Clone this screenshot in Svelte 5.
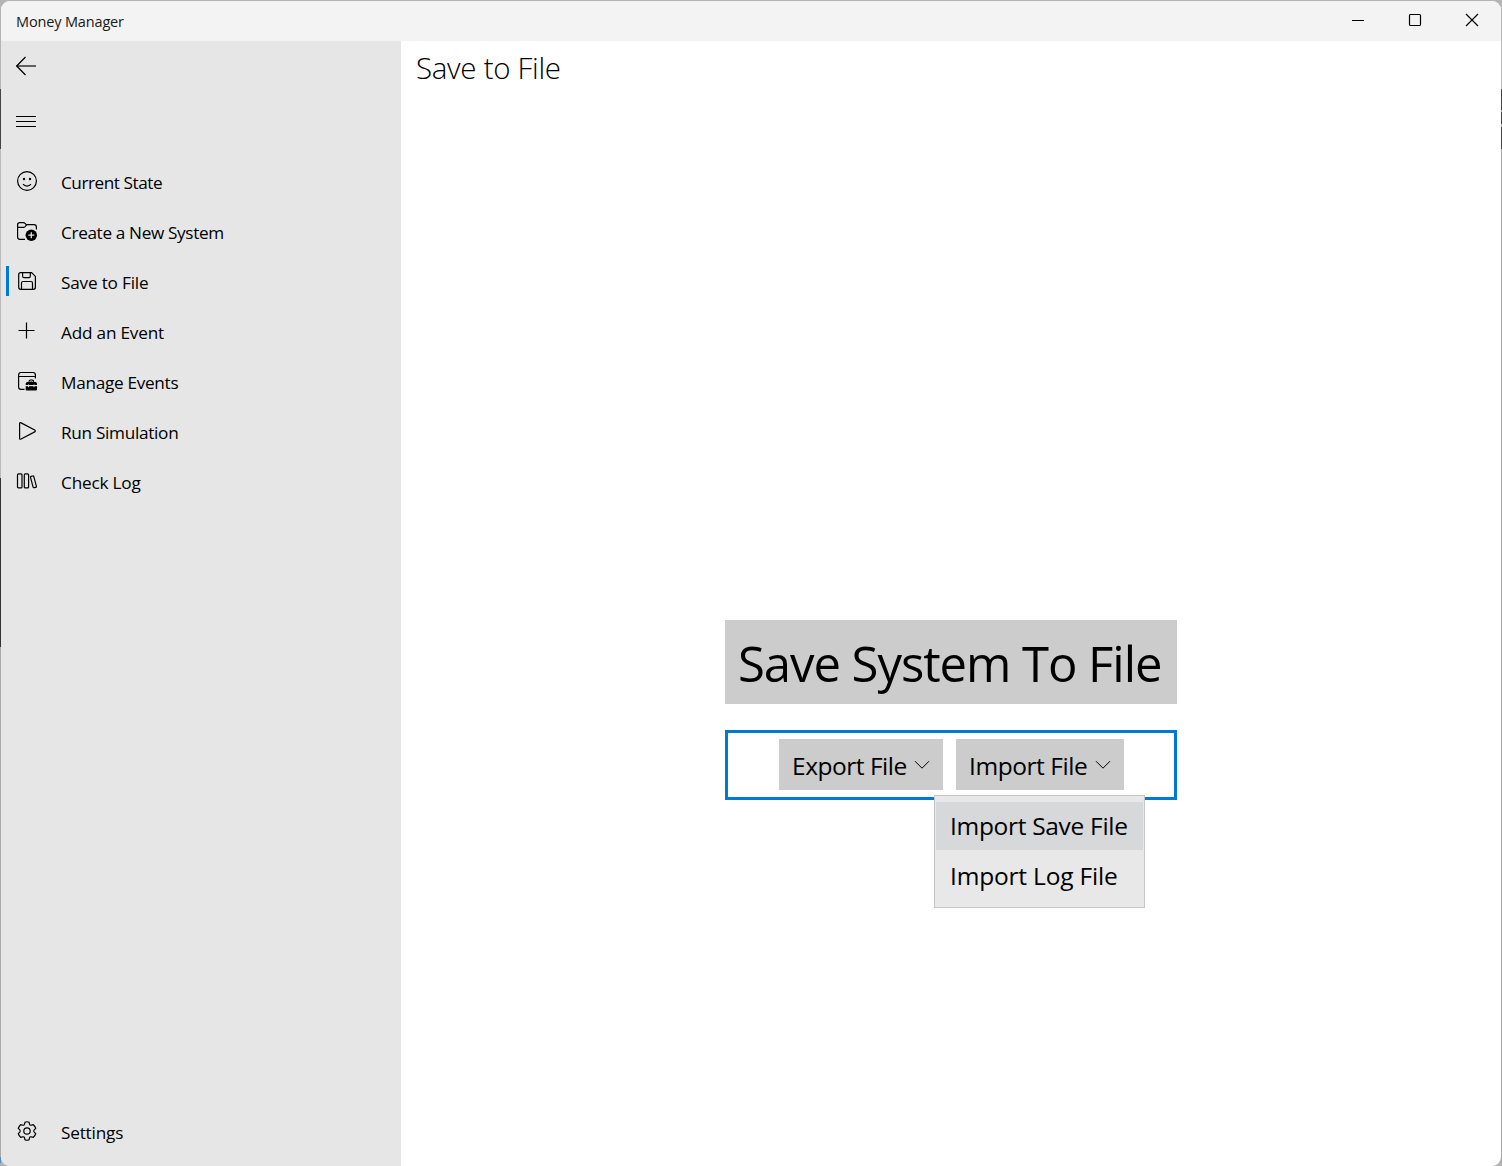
<script>
  const items = [
    { id: 'state', label: 'Current State' },
    { id: 'create', label: 'Create a New System' },
    { id: 'save', label: 'Save to File', active: true },
    { id: 'add', label: 'Add an Event' },
    { id: 'manage', label: 'Manage Events' },
    { id: 'run', label: 'Run Simulation' },
    { id: 'log', label: 'Check Log' },
    { id: 'settings', label: 'Settings', footer: true }
  ];
</script>

{#snippet icon(id)}
  <svg class="icon" viewBox="0 0 24 24" width="24" height="24">
    {#if id === 'state'}
      <circle cx="12" cy="12" r="9.4" />
      <path d="M8 15.2c1.1 1.3 2.4 1.9 4 1.9s2.9-.6 4-1.9" />
      <circle class="solid" cx="9" cy="10" r="1.2" />
      <circle class="solid" cx="15" cy="10" r="1.2" />
    {:else if id === 'create'}
      <path d="M10 20.3H4.800Q2.600 20.300 2.600 18.100V5.700Q2.600 3.600 4.700 3.600H8.500Q9.300 3.600 10 4.300L11.300 5.600H19Q21.400 5.600 21.400 8V10.500M2.600 8.300H8.500Q9.300 8.300 10 7.600L11.700 5.800" />
      <circle class="solid" cx="16.300" cy="16.200" r="5.700" />
      <path class="cut" d="M16.300 13.200v6M13.300 16.200h6" />
    {:else if id === 'save'}
      <path d="M5.700 3.600H16.600L20.400 7.400V18.300Q20.400 20.300 18.400 20.300H5.700Q3.700 20.300 3.700 18.300V5.600Q3.700 3.600 5.700 3.600ZM7.600 3.700V7.300Q7.600 8.700 9 8.700H14Q15.300 8.700 15.300 7.300V3.700M6.500 20.200V14Q6.500 12.500 8 12.500H16Q17.500 12.500 17.500 14V20.200" />
    {:else if id === 'add'}
      <path d="M11.500 3.500V19.500M3.500 11.500H19.500" />
    {:else if id === 'manage'}
      <path d="M9.500 20.300H6Q3.600 20.300 3.600 17.900V5.900Q3.600 3.500 6 3.500H18Q20.400 3.500 20.400 5.900V9.500M3.600 7.500H20.400" />
      <path class="solid" d="M13.500 13v-.700Q13.500 10.500 15.300 10.500h2Q19.100 10.500 19.100 12.300V13h1.200q1.700 0 1.700 1.700V16H10.700v-1.300q0-1.700 1.700-1.700ZM10.700 17H22v3.500q0 1-1 1h-9.300q-1 0-1-1Z" />
      <path class="cut thin" d="M15 13v-.500q0-.500.500-.500h1.600q.500 0 .500.500v.500M10.700 16.700H22M13.500 15.500v2.600M19 15.500v2.600" />
    {:else if id === 'run'}
      <path d="M4.600 4.700Q4.600 3.100 6.100 3.900L19.700 11Q21 12 19.700 12.900L6.100 20Q4.600 20.800 4.600 19.200Z" />
    {:else if id === 'log'}
      <rect x="2.500" y="4.900" width="4.500" height="14" rx="1" />
      <rect x="9.300" y="4.900" width="4.300" height="14" rx="1" />
      <path d="M15.500 8.400Q15.300 7.600 16.100 7.400L17.800 7Q18.600 6.800 18.800 7.600L21.400 17.300Q21.600 18.100 20.800 18.300L19.100 18.700Q18.300 18.900 18.100 18.100Z" />
    {:else}
      <path d="M10 3.200Q12 2.300 14 3.200L14.500 5.200Q14.900 6.500 16.300 6.200L18.300 5.700Q20 7.200 20.700 9.300L19.200 10.800Q18.200 12 19.200 13.200L20.700 14.700Q20 16.800 18.300 18.300L16.300 17.800Q14.900 17.500 14.500 18.800L14 20.800Q12 21.700 10 20.800L9.500 18.800Q9.100 17.500 7.700 17.800L5.700 18.300Q4 16.800 3.300 14.700L4.800 13.200Q5.800 12 4.800 10.800L3.300 9.300Q4 7.200 5.700 5.700L7.700 6.200Q9.100 6.500 9.500 5.200Z" />
      <circle cx="12" cy="12" r="3.200" />
    {/if}
  </svg>
{/snippet}

{#snippet chevron()}
  <svg class="chevron" viewBox="0 0 16 10" width="16" height="10">
    <path d="M1 1.200 8 8.200 15 1.200" />
  </svg>
{/snippet}

<div class="desktop">
  <div class="window">
    <header class="titlebar">
      <span class="app-name">Money Manager</span>
      <div class="controls">
        <svg viewBox="0 0 14 14" width="14" height="14"><path d="M1 7.500H13" /></svg>
        <svg viewBox="0 0 14 14" width="14" height="14"><rect x="1.500" y="1.500" width="11" height="11" rx="1" /></svg>
        <svg viewBox="0 0 14 14" width="14" height="14"><path d="M1 1 13 13M13 1 1 13" /></svg>
      </div>
    </header>
    <div class="body">
      <nav>
        <button class="tool" aria-label="Back">
          <svg viewBox="0 0 20 20" width="20" height="20"><path class="shaft" d="M.5 10H20" /><path d="M9.500 1 .700 10 9.500 19" /></svg>
        </button>
        <button class="tool menu-toggle" aria-label="Menu">
          <svg viewBox="0 0 20 20" width="20" height="20"><path d="M0 5.500H20M0 10.500H20M0 15.500H20" /></svg>
        </button>
        <ul>
          {#each items as item}
            <li class={[item.id, { active: item.active, footer: item.footer }]}>
              {@render icon(item.id)}
              <span class="label">{item.label}</span>
            </li>
          {/each}
        </ul>
      </nav>
      <main>
        <h1>Save to File</h1>
        <section class="panel">
          <div class="banner"><span>Save System To File</span></div>
          <div class="actions">
            <button class="drop export"><span>Export File</span>{@render chevron()}</button>
            <div class="anchor">
              <button class="drop import"><span>Import File</span>{@render chevron()}</button>
              <div class="menu">
                <div class="option hover"><span>Import Save File</span></div>
                <div class="option second"><span>Import Log File</span></div>
              </div>
            </div>
          </div>
        </section>
      </main>
    </div>
  </div>
</div>

<style>
  :global(body) {
    margin: 0;
    overflow: hidden;
  }
  .desktop {
    box-sizing: border-box;
    width: 1502px;
    height: 1166px;
    padding: 1px 1px 0;
    color: #000;
    font-family: 'Open Sans', 'Noto Sans', sans-serif;
    background:
      linear-gradient(#b4b4b4 89px, #444 89px 149px, #bbb 149px 478px, #333 478px 647px, #aaa 647px 1157px, #4f8fc4 1157px 1163px, #aaa 1163px) left / 1px 100% no-repeat,
      linear-gradient(#b8b8b8 89px, #444 89px 110px, #aaa 110px 112px, #444 112px 124px, #aaa 124px 127px, #444 127px 149px, #aaa 149px) right / 1px 100% no-repeat,
      #b4b4b4;
  }
  .window {
    height: 1165px;
    display: flex;
    flex-direction: column;
    overflow: hidden;
    border-radius: 9px;
    background: #fff;
  }
  .titlebar {
    height: 40px;
    flex: none;
    display: flex;
    justify-content: space-between;
    background: #f3f3f3;
  }
  .app-name {
    padding-left: 15px;
    font-size: 14.500px;
    letter-spacing: -0.150px;
    line-height: 41px;
    color: #191919;
  }
  .controls {
    display: flex;
    gap: 43px;
    padding: 12px 22px 0 0;
  }
  svg {
    display: block;
    flex: none;
    fill: none;
    stroke: #000;
    stroke-width: 1.200;
  }
  .body {
    flex: 1;
    display: flex;
  }
  nav {
    width: 400px;
    display: flex;
    flex-direction: column;
    background: #e6e6e6;
  }
  button {
    border: 0;
    margin: 0;
    font: inherit;
    color: inherit;
    background: none;
  }
  .tool {
    height: 50px;
    padding: 0 0 0 15px;
    display: flex;
    align-items: center;
  }
  .menu-toggle {
    margin-top: 5px;
  }
  .menu-toggle svg {
    stroke-width: 1;
  }
  .shaft {
    stroke-width: 1.600;
    stroke: #333;
  }
  ul {
    flex: 1;
    display: flex;
    flex-direction: column;
    list-style: none;
    margin: 10px 0 0;
    padding: 0 0 10px;
  }
  li {
    height: 50px;
    display: flex;
    align-items: center;
    padding-left: 14px;
    font-size: 17.200px;
    letter-spacing: -0.200px;
  }
  .state {
    letter-spacing: -0.460px;
  }
  .create {
    letter-spacing: -0.360px;
  }
  .manage,
  .run {
    letter-spacing: -0.300px;
  }
  .footer {
    margin-top: auto;
  }
  .active {
    padding-left: 6px;
  }
  .active::before {
    content: '';
    width: 3px;
    height: 30px;
    margin-right: 5px;
    margin-left: -1px;
    background: #0078d7;
  }
  .active .icon {
    margin-left: 1px;
  }
  .label {
    margin: 3px 0 0 22px;
    line-height: 24px;
    white-space: nowrap;
  }
  .solid {
    fill: #000;
    stroke: none;
  }
  .cut {
    stroke: #e6e6e6;
    stroke-width: 1.300;
  }
  .thin {
    stroke-width: 1;
  }
  main {
    flex: 1;
    display: flex;
    flex-direction: column;
    align-items: center;
  }
  h1 {
    align-self: flex-start;
    margin: 0;
    padding-left: 15px;
    height: 56px;
    font-size: 29.500px;
    font-weight: 350;
    letter-spacing: -0.300px;
    line-height: 54px;
    white-space: nowrap;
  }
  .panel {
    width: 452px;
    margin-top: 523px;
  }
  .banner {
    height: 84px;
    box-sizing: border-box;
    padding-left: 13px;
    background: #ccc;
    font-size: 49px;
    letter-spacing: -1.050px;
    line-height: 87px;
    white-space: nowrap;
  }
  .actions {
    box-sizing: border-box;
    height: 70px;
    margin-top: 26px;
    padding: 6px 0 0 51px;
    display: flex;
    gap: 13px;
    border: 3px solid #0078d7;
  }
  .drop {
    height: 51px;
    padding: 0 13px;
    display: flex;
    justify-content: space-between;
    background: #ccc;
    font-size: 24.500px;
    letter-spacing: -0.480px;
    line-height: 53px;
    white-space: nowrap;
  }
  .export {
    width: 164px;
  }
  .import {
    width: 168px;
    letter-spacing: -0.430px;
  }
  .chevron {
    margin-top: 21px;
    stroke-width: 1;
  }
  .anchor {
    position: relative;
    height: 51px;
  }
  .menu {
    position: absolute;
    top: 56px;
    left: -22px;
    box-sizing: border-box;
    width: 211px;
    height: 113px;
    padding: 6px 1px 0;
    border: 1px solid #c6c6c6;
    background: #e8e8e8;
    font-size: 24.500px;
    white-space: nowrap;
  }
  .option {
    height: 48px;
    padding-left: 14px;
    line-height: 48px;
    letter-spacing: -0.310px;
  }
  .hover {
    background: #d7d8d9;
  }
  .second {
    margin-top: 2px;
    letter-spacing: -0.180px;
  }
</style>
